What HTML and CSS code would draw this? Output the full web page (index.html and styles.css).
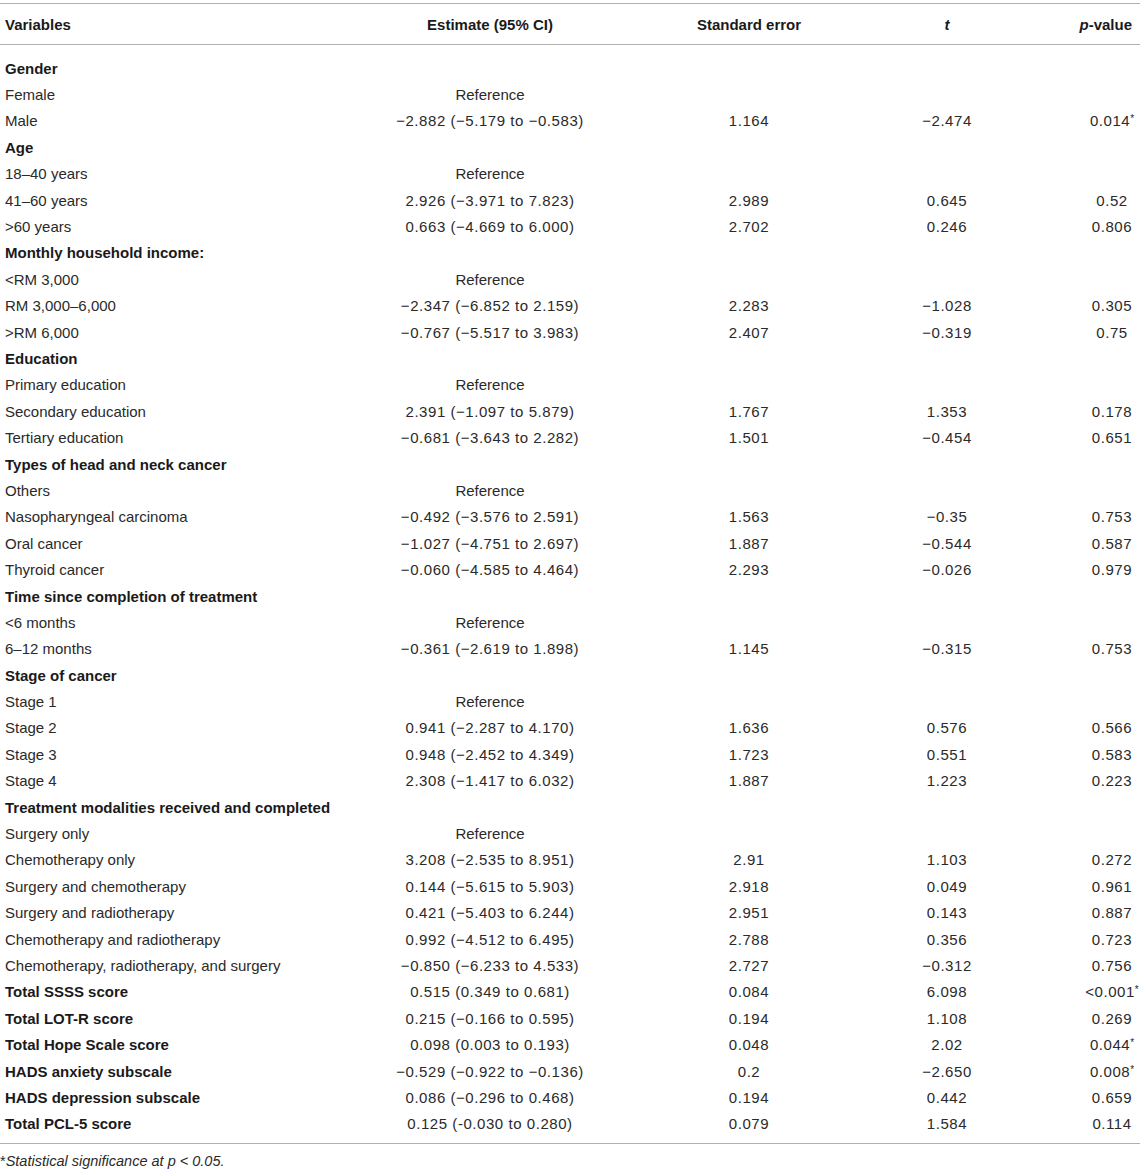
FILE: index.html
```html
<!DOCTYPE html>
<html>
<head>
<meta charset="utf-8">
<link rel="stylesheet" href="styles.css">
</head>
<body>
<div class="page">
<table class="tbl">
<colgroup>
<col class="c1"><col class="c2"><col class="c3"><col class="c4"><col class="c5">
</colgroup>
<thead>
<tr class="head">
<th class="var">Variables</th>
<th>Estimate (95% CI)</th>
<th>Standard error</th>
<th><i>t</i></th>
<th class="pv"><i>p</i>-value</th>
</tr>
</thead>
<tbody>
<tr class="spacer top"><td colspan="5"></td></tr>
<tr class="cat"><td class="var">Gender</td><td></td><td></td><td></td><td></td></tr>
<tr><td class="var">Female</td><td class="ref">Reference</td><td></td><td></td><td></td></tr>
<tr><td class="var">Male</td><td>−2.882 (−5.179 to −0.583)</td><td>1.164</td><td>−2.474</td><td class="pv">0.014<span class="ast">*</span></td></tr>
<tr class="cat"><td class="var">Age</td><td></td><td></td><td></td><td></td></tr>
<tr><td class="var">18–40 years</td><td class="ref">Reference</td><td></td><td></td><td></td></tr>
<tr><td class="var">41–60 years</td><td>2.926 (−3.971 to 7.823)</td><td>2.989</td><td>0.645</td><td class="pv">0.52</td></tr>
<tr><td class="var">&gt;60 years</td><td>0.663 (−4.669 to 6.000)</td><td>2.702</td><td>0.246</td><td class="pv">0.806</td></tr>
<tr class="cat"><td class="var">Monthly household income:</td><td></td><td></td><td></td><td></td></tr>
<tr><td class="var">&lt;RM 3,000</td><td class="ref">Reference</td><td></td><td></td><td></td></tr>
<tr><td class="var">RM 3,000–6,000</td><td>−2.347 (−6.852 to 2.159)</td><td>2.283</td><td>−1.028</td><td class="pv">0.305</td></tr>
<tr><td class="var">&gt;RM 6,000</td><td>−0.767 (−5.517 to 3.983)</td><td>2.407</td><td>−0.319</td><td class="pv">0.75</td></tr>
<tr class="cat"><td class="var">Education</td><td></td><td></td><td></td><td></td></tr>
<tr><td class="var">Primary education</td><td class="ref">Reference</td><td></td><td></td><td></td></tr>
<tr><td class="var">Secondary education</td><td>2.391 (−1.097 to 5.879)</td><td>1.767</td><td>1.353</td><td class="pv">0.178</td></tr>
<tr><td class="var">Tertiary education</td><td>−0.681 (−3.643 to 2.282)</td><td>1.501</td><td>−0.454</td><td class="pv">0.651</td></tr>
<tr class="cat"><td class="var">Types of head and neck cancer</td><td></td><td></td><td></td><td></td></tr>
<tr><td class="var">Others</td><td class="ref">Reference</td><td></td><td></td><td></td></tr>
<tr><td class="var">Nasopharyngeal carcinoma</td><td>−0.492 (−3.576 to 2.591)</td><td>1.563</td><td>−0.35</td><td class="pv">0.753</td></tr>
<tr><td class="var">Oral cancer</td><td>−1.027 (−4.751 to 2.697)</td><td>1.887</td><td>−0.544</td><td class="pv">0.587</td></tr>
<tr><td class="var">Thyroid cancer</td><td>−0.060 (−4.585 to 4.464)</td><td>2.293</td><td>−0.026</td><td class="pv">0.979</td></tr>
<tr class="cat"><td class="var">Time since completion of treatment</td><td></td><td></td><td></td><td></td></tr>
<tr><td class="var">&lt;6 months</td><td class="ref">Reference</td><td></td><td></td><td></td></tr>
<tr><td class="var">6–12 months</td><td>−0.361 (−2.619 to 1.898)</td><td>1.145</td><td>−0.315</td><td class="pv">0.753</td></tr>
<tr class="cat"><td class="var">Stage of cancer</td><td></td><td></td><td></td><td></td></tr>
<tr><td class="var">Stage 1</td><td class="ref">Reference</td><td></td><td></td><td></td></tr>
<tr><td class="var">Stage 2</td><td>0.941 (−2.287 to 4.170)</td><td>1.636</td><td>0.576</td><td class="pv">0.566</td></tr>
<tr><td class="var">Stage 3</td><td>0.948 (−2.452 to 4.349)</td><td>1.723</td><td>0.551</td><td class="pv">0.583</td></tr>
<tr><td class="var">Stage 4</td><td>2.308 (−1.417 to 6.032)</td><td>1.887</td><td>1.223</td><td class="pv">0.223</td></tr>
<tr class="cat"><td class="var">Treatment modalities received and completed</td><td></td><td></td><td></td><td></td></tr>
<tr><td class="var">Surgery only</td><td class="ref">Reference</td><td></td><td></td><td></td></tr>
<tr><td class="var">Chemotherapy only</td><td>3.208 (−2.535 to 8.951)</td><td>2.91</td><td>1.103</td><td class="pv">0.272</td></tr>
<tr><td class="var">Surgery and chemotherapy</td><td>0.144 (−5.615 to 5.903)</td><td>2.918</td><td>0.049</td><td class="pv">0.961</td></tr>
<tr><td class="var">Surgery and radiotherapy</td><td>0.421 (−5.403 to 6.244)</td><td>2.951</td><td>0.143</td><td class="pv">0.887</td></tr>
<tr><td class="var">Chemotherapy and radiotherapy</td><td>0.992 (−4.512 to 6.495)</td><td>2.788</td><td>0.356</td><td class="pv">0.723</td></tr>
<tr><td class="var">Chemotherapy, radiotherapy, and surgery</td><td>−0.850 (−6.233 to 4.533)</td><td>2.727</td><td>−0.312</td><td class="pv">0.756</td></tr>
<tr><td class="var b">Total SSSS score</td><td>0.515 (0.349 to 0.681)</td><td>0.084</td><td>6.098</td><td class="pv">&lt;0.001<span class="ast">*</span></td></tr>
<tr><td class="var b">Total LOT-R score</td><td>0.215 (−0.166 to 0.595)</td><td>0.194</td><td>1.108</td><td class="pv">0.269</td></tr>
<tr><td class="var b">Total Hope Scale score</td><td>0.098 (0.003 to 0.193)</td><td>0.048</td><td>2.02</td><td class="pv">0.044<span class="ast">*</span></td></tr>
<tr><td class="var b">HADS anxiety subscale</td><td>−0.529 (−0.922 to −0.136)</td><td>0.2</td><td>−2.650</td><td class="pv">0.008<span class="ast">*</span></td></tr>
<tr><td class="var b">HADS depression subscale</td><td>0.086 (−0.296 to 0.468)</td><td>0.194</td><td>0.442</td><td class="pv">0.659</td></tr>
<tr><td class="var b">Total PCL-5 score</td><td>0.125 (-0.030 to 0.280)</td><td>0.079</td><td>1.584</td><td class="pv">0.114</td></tr>
<tr class="spacer bottom"><td colspan="5"></td></tr>
</tbody>
</table>
<p class="note"><span class="star">*</span><i>Statistical significance at p &lt; 0.05.</i></p>
</div>
</body>
</html>
```

FILE: styles.css
```css
html, body {
  margin: 0;
  padding: 0;
  background: #fff;
}
body {
  font-family: "Liberation Sans", Arial, Helvetica, sans-serif;
  font-size: 15px;
  color: #2a2a2a;
}
.page {
  padding-top: 3px;
  width: 1140px;
}
.tbl {
  width: 1140px;
  border-collapse: collapse;
  table-layout: fixed;
}
.c1 { width: 380px; }
.c2 { width: 220px; }
.c3 { width: 298px; }
.c4 { width: 98px; }
.c5 { width: 144px; }
.head th {
  height: 40px;
  padding: 0;
  font-weight: bold;
  color: #1a1a1a;
  text-align: center;
  border-top: 1px solid #b0b0b0;
  border-bottom: 1px solid #b0b0b0;
  vertical-align: middle;
}
.head th.var { text-align: left; padding-left: 5px; }
.head th.pv { text-align: right; padding-right: 8px; }
.tbl td {
  height: 26.4px;
  padding: 0;
  text-align: center;
  vertical-align: middle;
  white-space: nowrap;
  line-height: 17px;
  letter-spacing: 0.55px;
}
.tbl td.var {
  text-align: left;
  padding-left: 5px;
  letter-spacing: 0;
}
.tbl td.ref {
  letter-spacing: 0;
}
.tbl td.pv {
  padding-left: 88px;
}
.cat td.var, td.b {
  font-weight: bold;
  color: #1a1a1a;
}
.spacer.top td { height: 10px; }
.spacer.bottom td {
  height: 6px;
  border-bottom: 1px solid #b0b0b0;
}
.ast {
  font-size: 10px;
  vertical-align: 4px;
  line-height: 0;
  letter-spacing: 0;
}
.note {
  margin: 0;
  padding: 9px 0 0 0;
  font-size: 14.5px;
  line-height: 17px;
  color: #2a2a2a;
}
.note .star { font-style: normal; }
```
